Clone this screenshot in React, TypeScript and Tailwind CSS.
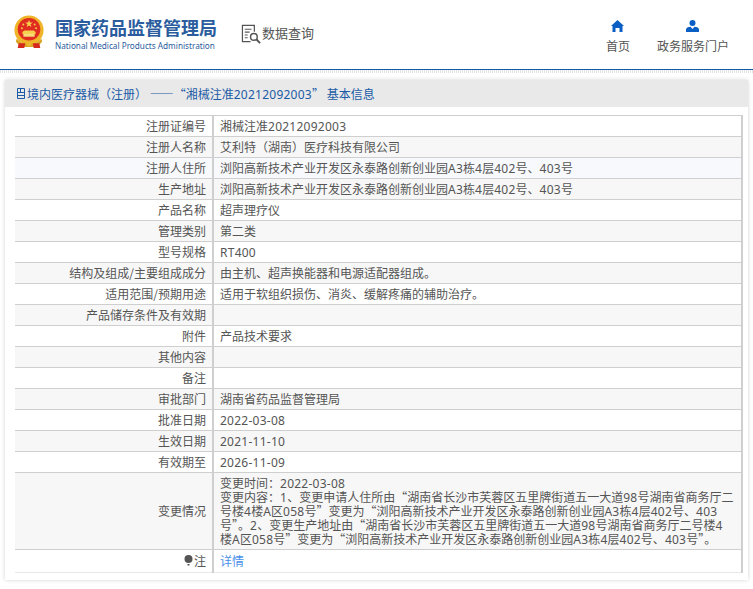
import React from 'react';

const rows = [
  { label: '注册证编号', value: '湘械注准20212092003' },
  { label: '注册人名称', value: '艾利特（湖南）医疗科技有限公司' },
  { label: '注册人住所', value: '浏阳高新技术产业开发区永泰路创新创业园A3栋4层402号、403号', tint: 'bg-[#f7f9fc]' },
  { label: '生产地址', value: '浏阳高新技术产业开发区永泰路创新创业园A3栋4层402号、403号' },
  { label: '产品名称', value: '超声理疗仪' },
  { label: '管理类别', value: '第二类' },
  { label: '型号规格', value: 'RT400' },
  { label: '结构及组成/主要组成成分', value: '由主机、超声换能器和电源适配器组成。' },
  { label: '适用范围/预期用途', value: '适用于软组织损伤、消炎、缓解疼痛的辅助治疗。' },
  { label: '产品储存条件及有效期', value: '' },
  { label: '附件', value: '产品技术要求' },
  { label: '其他内容', value: '' },
  { label: '备注', value: '' },
  { label: '审批部门', value: '湖南省药品监督管理局' },
  { label: '批准日期', value: '2022-03-08' },
  { label: '生效日期', value: '2021-11-10' },
  { label: '有效期至', value: '2026-11-09' },
];

// latin runs use a slightly wider face than the CJK around them
const Mixed = ({ text }: { text: string }) => (
  <>
    {text.split(/([A-Za-z0-9-]+)/).map((part, i) =>
      i % 2 === 1 ? (
        <span key={i} className="font-['Noto_Sans',sans-serif] tracking-[0.25px] leading-[12px]">{part}</span>
      ) : (
        part
      ),
    )}
  </>
);

const Emblem = () => (
  <svg width="32" height="34" viewBox="0 0 34 36" className="shrink-0">
    <circle cx="17" cy="16" r="15.500" fill="#f0b429" />
    <circle cx="17" cy="15" r="12" fill="#e02b20" />
    <polygon points="17,5 18,8 21,8 18.600,9.800 19.500,12.600 17,11 14.500,12.600 15.400,9.800 13,8 16,8" fill="#f6d04d" />
    <circle cx="11" cy="10" r="1" fill="#f6d04d" />
    <circle cx="23" cy="10" r="1" fill="#f6d04d" />
    <circle cx="9.500" cy="14" r="1" fill="#f6d04d" />
    <circle cx="24.500" cy="14" r="1" fill="#f6d04d" />
    <path d="M10 20h14v-2l-2-1.500h-10l-2 1.500z" fill="#f6d04d" />
    <rect x="11" y="20" width="12" height="3" fill="#f8dc7a" />
    <path d="M4 25c4 5 8 6 13 6s9-1 13-6l1 3c-3 5-8 6-14 6s-11-1-14-6z" fill="#d9a520" />
    <path d="M6 30h7l-1 5h-7zM21 30h7l1 5h-7z" fill="#d42a1e" />
    <circle cx="17" cy="31" r="2.500" fill="#e8b830" />
  </svg>
);

const SearchDoc = () => (
  <svg width="21" height="21" viewBox="0 0 22 22" fill="none" stroke="#555" className="shrink-0">
    <path d="M10 18.500H1.500V1.500H14V8" strokeWidth="1.300" />
    <path d="M4 5.500h7M4 8.500h5M4 11.500h3M4 14.500h3" strokeWidth="1.100" />
    <circle cx="13.500" cy="13.500" r="3.500" strokeWidth="1.500" />
    <path d="M16 16l4 4" strokeWidth="2" />
  </svg>
);

const Nav = ({ icon, text }: { icon: React.ReactNode; text: string }) => (
  <div className="flex flex-col items-center gap-[7px]">
    {icon}
    <span className="text-[12px] leading-[14px] text-[#555]">{text}</span>
  </div>
);

export default function App() {
  return (
    <div lang="zh-CN" className="w-[753px] h-[589px] overflow-hidden bg-white font-['Noto_Sans_CJK_SC',sans-serif] text-[12px] text-[#555]">
      <header className="h-[70px] flex border-b border-[#0f5aa8]">
        <div className="pl-[13px] pt-[15px]"><Emblem /></div>
        <div className="ml-[10px] pt-[16px] w-[160px]">
          <div className="text-[18px] leading-[22px] font-bold text-[#2a5c9e] whitespace-nowrap">国家药品监督管理局</div>
          <div className="mt-[2px] text-[8.200px] leading-[11px] font-['Noto_Sans',sans-serif] text-[#2a5c9e] whitespace-nowrap">National Medical Products Administration</div>
        </div>
        <div className="ml-[26px] pt-[24px] flex items-start">
          <SearchDoc />
          <span className="text-[13px] leading-[18px] text-[#555]">数据查询</span>
        </div>
        <div className="ml-auto mr-[24px] pt-[20px] flex gap-[27px]">
          <Nav
            text="首页"
            icon={
              <svg width="13" height="12" viewBox="0 0 13 12" fill="#0a5fc4">
                <path d="M6.500 0L13 6h-1.500v6H8.500V8h-4v4H1.500V6H0z" />
              </svg>
            }
          />
          <Nav
            text="政务服务门户"
            icon={
              <svg width="13" height="12" viewBox="0 0 13 12" fill="#0a5fc4">
                <circle cx="6.500" cy="3" r="3" />
                <path d="M0 12V9.500C0 8 2 7 4.500 6.800L6.500 9l2-2.200C11 7 13 8 13 9.500V12z" />
              </svg>
            }
          />
        </div>
      </header>
      <div className="h-[3px] bg-[repeating-linear-gradient(90deg,#e4e4e4_0,#e4e4e4_1px,#fff_1px,#fff_2px)]" />

      <main className="mx-[5px] mt-[7px] h-[500px] shadow-[0_0_4px_rgba(0,0,0,0.18)] bg-white">
        <div className="h-[27px] bg-[#e9e9e9] pl-[10px] text-[12px] text-[#1b5ba6] flex items-center whitespace-pre">
          <svg width="11" height="13" viewBox="0 0 11 13" fill="none" stroke="#1b5ba6" className="mr-[1px]">
            <path d="M2.500 1.500h7v10h-7zM2.500 5.500h7M2.500 8.500h7M5.500 1.500v4" />
          </svg>
          <span><Mixed text="境内医疗器械（注册） ——“湘械注准20212092003” 基本信息" /></span>
        </div>

        <table className="ml-[10px] mt-[8px] w-[728px] border-collapse table-fixed">
          <colgroup>
            <col className="w-[198px]" />
            <col />
          </colgroup>
          <tbody>
            {rows.map((r, i) => (
              <tr key={r.label} className={`h-[21px] border-y border-[#cfcfcf] ${r.tint ?? (i % 2 === 1 ? 'bg-[#f7f7f7]' : 'bg-white')}`}>
                <td className="text-right pr-[6px] leading-[14px] whitespace-nowrap">{r.label}</td>
                <td className="border-l-2 border-r-2 border-[#cfcfcf] pl-[6px] leading-[14px] whitespace-nowrap"><Mixed text={r.value} /></td>
              </tr>
            ))}
            <tr className="h-[77px] border-y border-[#cfcfcf] bg-[#f7f7f7]">
              <td className="text-right pr-[6px]">变更情况</td>
              <td className="border-l-2 border-r-2 border-[#cfcfcf] pl-[6px] pr-[7px] leading-[14px]">
                <div><Mixed text="变更时间：2022-03-08" /></div>
                <div><Mixed text="变更内容：1、变更申请人住所由“湖南省长沙市芙蓉区五里牌街道五一大道98号湖南省商务厅二号楼4楼A区058号”变更为“浏阳高新技术产业开发区永泰路创新创业园A3栋4层402号、403号”。2、变更生产地址由“湖南省长沙市芙蓉区五里牌街道五一大道98号湖南省商务厅二号楼4楼A区058号”变更为“浏阳高新技术产业开发区永泰路创新创业园A3栋4层402号、403号”。" /></div>
              </td>
            </tr>
            <tr className="h-[23px] border-b border-[#e8e8e8] bg-white">
              <td className="text-right pr-[6px]">
                <span className="inline-flex items-center gap-[1px]">
                  <svg width="9" height="11" viewBox="0 0 9 11" fill="#555">
                    <circle cx="4.500" cy="4" r="4" />
                    <rect x="3.500" y="9" width="2" height="1.500" />
                  </svg>
                  注
                </span>
              </td>
              <td className="border-l-2 border-r-2 border-[#cfcfcf] pl-[6px] text-[#4a8fe8]">详情</td>
            </tr>
          </tbody>
        </table>
      </main>
    </div>
  );
}
